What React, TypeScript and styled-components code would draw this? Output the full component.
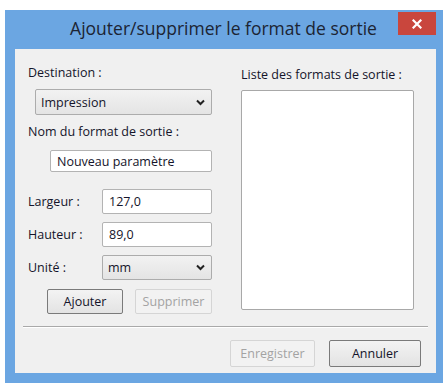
import styled, { createGlobalStyle } from 'styled-components'

const GlobalStyle = createGlobalStyle`
  html, body {
    margin: 0;
    padding: 0;
    background: #ffffff;
  }
  body {
    font-family: "Open Sans", "Liberation Sans", sans-serif;
  }
`

function Chevron() {
  return (
    <svg width="9" height="7" viewBox="0 0 9 7">
      <path d="M1 1.5 L4.5 5 L8 1.5" fill="none" stroke="#222" strokeWidth="2" />
    </svg>
  )
}

function CloseIcon() {
  return (
    <svg width="10" height="10" viewBox="0 0 10 10">
      <path d="M1.5 1.5 L8.5 8.5 M8.5 1.5 L1.5 8.5" stroke="#fff" strokeWidth="2.2" strokeLinecap="square" />
    </svg>
  )
}

function App() {
  return (
    <>
      <GlobalStyle />
      <Page>
        <Window>
          <TitleBar>
            <span />
            <Title>Ajouter/supprimer le format de sortie</Title>
            <CloseButton>
              <CloseIcon />
            </CloseButton>
          </TitleBar>
          <Body>
            <Columns>
              <LeftCol>
                <Label>Destination :</Label>
                <Select $indent={7} $width={177} $height={26} $top={8}>
                  <span>Impression</span>
                  <Chevron />
                </Select>
                <Label $top={9}>Nom du format de sortie :</Label>
                <TextBox $indent={22} $width={162} $height={22} $top={10}>
                  Nouveau paramètre
                </TextBox>
                <FieldRow $top={17}>
                  <Label>Largeur :</Label>
                  <TextBox $width={110} $height={25}>127,0</TextBox>
                </FieldRow>
                <FieldRow $top={8}>
                  <Label>Hauteur :</Label>
                  <TextBox $width={110} $height={25}>89,0</TextBox>
                </FieldRow>
                <FieldRow $top={8}>
                  <Label>Unité :</Label>
                  <Select $width={110} $height={25}>
                    <span>mm</span>
                    <Chevron />
                  </Select>
                </FieldRow>
                <ButtonRow>
                  <Button $width={76} $strong>Ajouter</Button>
                  <Button $width={77} disabled>Supprimer</Button>
                </ButtonRow>
              </LeftCol>
              <RightCol>
                <Label>Liste des formats de sortie :</Label>
                <ListBox />
              </RightCol>
            </Columns>
            <Separator />
            <Footer>
              <Button $width={85} $height={27} disabled>Enregistrer</Button>
              <Button $width={92} $height={27} $strong>Annuler</Button>
            </Footer>
          </Body>
        </Window>
      </Page>
    </>
  )
}

const Page = styled.div`
  padding: 10px 0 0 5px;
`
const Window = styled.div`
  width: 438px;
  height: 373px;
  box-sizing: border-box;
  background: #6ba6e2;
  padding: 0 7px 10px 10px;
  display: flex;
  flex-direction: column;
`
const TitleBar = styled.div`
  height: 39px;
  display: grid;
  grid-template-columns: 1fr auto 1fr;
  align-items: start;
`
const Title = styled.div`
  font-size: 17.5px;
  color: #1c2433;
  line-height: 20px;
  margin-top: 8px;
  margin-left: -4px;
  white-space: nowrap;
`
const CloseButton = styled.div`
  justify-self: end;
  margin-top: 2px;
  width: 38px;
  height: 23px;
  background: #c9463d;
  display: flex;
  align-items: center;
  justify-content: center;
`
const Body = styled.div`
  flex: 1;
  background: #f0f0f0;
  padding: 16px 0 0 0;
  display: flex;
  flex-direction: column;
`
const Columns = styled.div`
  display: grid;
  grid-template-columns: 184px 173px;
  column-gap: 29px;
  padding-left: 13px;
`
const LeftCol = styled.div`
  display: flex;
  flex-direction: column;
`
const RightCol = styled.div`
  display: flex;
  flex-direction: column;
  padding-top: 2px;
`
const Label = styled.div<{ $top?: number }>`
  font-size: 12.5px;
  line-height: 16px;
  height: 16px;
  color: #14142a;
  white-space: nowrap;
  margin-top: ${p => p.$top ?? 0}px;
`
const Select = styled.div<{ $indent?: number; $width: number; $height: number; $top?: number }>`
  box-sizing: border-box;
  margin-top: ${p => p.$top ?? 0}px;
  margin-left: ${p => p.$indent ?? 0}px;
  width: ${p => p.$width}px;
  height: ${p => p.$height}px;
  border: 1px solid #acacac;
  border-radius: 2px;
  background: linear-gradient(#f2f2f2, #e4e4e4);
  display: flex;
  align-items: center;
  justify-content: space-between;
  padding: 0 6px 0 5px;
  font-size: 12.5px;
  color: #14142a;
`
const TextBox = styled.div<{ $indent?: number; $width: number; $height: number; $top?: number }>`
  box-sizing: border-box;
  margin-top: ${p => p.$top ?? 0}px;
  margin-left: ${p => p.$indent ?? 0}px;
  width: ${p => p.$width}px;
  height: ${p => p.$height}px;
  border: 1px solid #b3b3b3;
  border-radius: 2px;
  background: #ffffff;
  display: flex;
  align-items: center;
  padding: 0 6px;
  font-size: 12.5px;
  color: #14142a;
  white-space: nowrap;
`
const FieldRow = styled.div<{ $top?: number }>`
  display: grid;
  grid-template-columns: 74px 110px;
  align-items: center;
  margin-top: ${p => p.$top ?? 0}px;
`
const ButtonRow = styled.div`
  display: flex;
  gap: 12px;
  margin: 9px 0 0 19px;
`
const Button = styled.button<{ $width: number; $height?: number; $strong?: boolean }>`
  box-sizing: border-box;
  width: ${p => p.$width}px;
  height: ${p => p.$height ?? 25}px;
  padding: 0;
  font-family: "Open Sans", "Liberation Sans", sans-serif;
  font-size: 12.5px;
  color: #14142a;
  border: 1px solid ${p => (p.$strong ? '#7a7a7a' : '#acacac')};
  border-radius: 2px;
  background: linear-gradient(#f3f3f3, #e3e3e3);

  &:disabled {
    color: #a3a3a3;
    border-color: #d5d5d5;
    background: #f2f2f2;
  }
`
const ListBox = styled.div`
  margin-top: 7px;
  height: 220px;
  box-sizing: border-box;
  background: #ffffff;
  border: 1px solid #a8a8a8;
  border-radius: 2px;
`
const Separator = styled.div`
  margin: 12px 8px 0 8px;
  height: 1px;
  background: #a9a9a9;
  border-bottom: 1px solid #ffffff;
`
const Footer = styled.div`
  display: flex;
  justify-content: flex-end;
  gap: 14px;
  margin-top: 12px;
  padding-right: 15px;
`

export default App
